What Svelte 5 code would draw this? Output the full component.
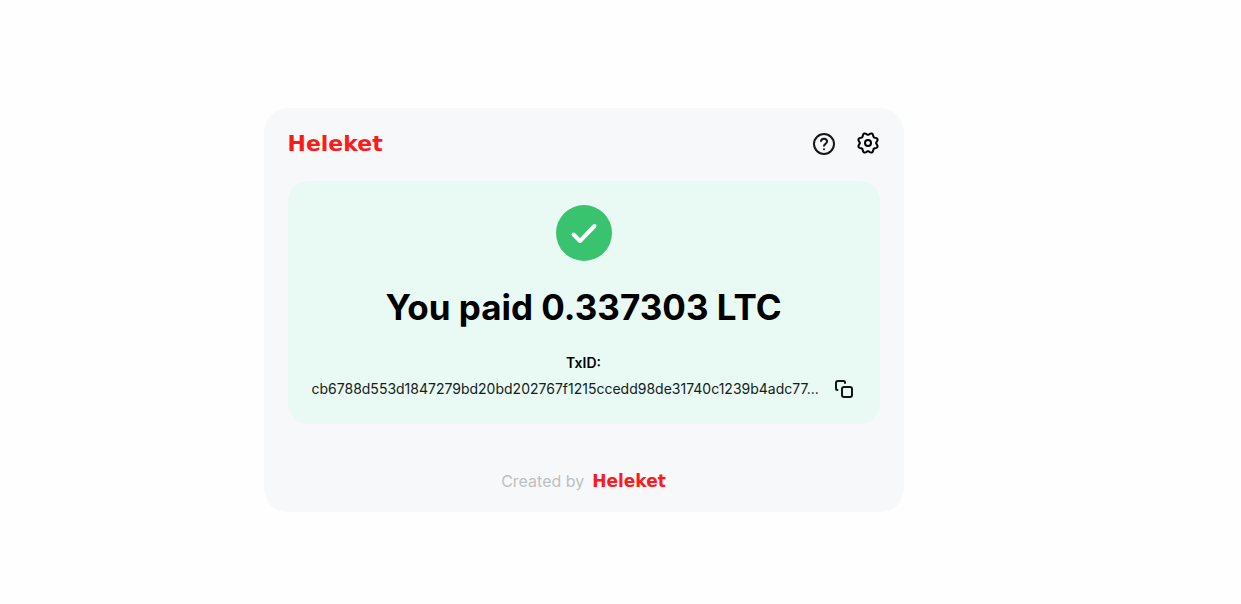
<script lang="ts">
  const amount = '0.337303';
  const currency = 'LTC';
  const txid = 'cb6788d553d1847279bd20bd202767f1215ccedd98de31740c1239b4adc77';

  // outline of the eight-lobed settings gear, centred on 12,12
  function gearPath(radius: number, depth: number) {
    const points = Array.from({ length: 96 }, (_, i) => {
      const angle = (i / 96) * Math.PI * 2;
      const r = radius - depth * Math.cos(8 * angle);
      return `${(12 + r * Math.cos(angle)).toFixed(2)} ${(12 + r * Math.sin(angle)).toFixed(2)}`;
    });
    return `M${points.join('L')}Z`;
  }

  function copyTxid() {
    navigator.clipboard?.writeText(txid);
  }
</script>

<main class="page">
  <section class="card">
    <header class="header">
      <a class="logo" href="/">Heleket</a>
      <div class="actions">
        <button type="button" class="icon-btn" aria-label="Help">
          <svg width="24" height="24" viewBox="0 0 24 24" fill="none" stroke="#15181b" stroke-width="2" stroke-linecap="round" stroke-linejoin="round">
            <circle cx="12" cy="12" r="10" />
            <path d="M9 9a3.1 3.1 0 0 1 6.1.6c0 2.1-3.1 2.3-3.1 4.2" />
            <path d="M12 17.2h.01" />
          </svg>
        </button>
        <button type="button" class="icon-btn" aria-label="Settings">
          <svg width="24" height="24" viewBox="0 1 24 24" fill="none" stroke="#000" stroke-width="2" stroke-linejoin="round">
            <path d={gearPath(9.2, 1.05)} />
            <circle cx="12" cy="12" r="3" />
          </svg>
        </button>
      </div>
    </header>

    <div class="status">
      <svg width="56" height="56" viewBox="0 0 56 56" fill="none">
        <circle cx="28" cy="28" r="28" fill="#3ac36f" />
        <path d="M17.5 29.5l6.5 6.5 14.500-15" stroke="#fff" stroke-width="4" stroke-linecap="round" stroke-linejoin="round" />
      </svg>
      <h1 class="title">You paid {amount} {currency}</h1>
      <h2 class="label">TxID:</h2>
      <div class="tx">
        <span class="hash">{txid}...</span>
        <button type="button" class="icon-btn" aria-label="Copy TxID" onclick={copyTxid}>
          <svg width="24" height="24" viewBox="0 0 24 24" fill="none" stroke="#101715" stroke-width="2" stroke-linecap="round" stroke-linejoin="round">
            <rect x="10" y="10" width="10" height="10" rx="2" />
            <path d="M5.5 13A1.5 1.5 0 0 1 4 11.500V6a2 2 0 0 1 2-2h5.500A1.500 1.500 0 0 1 13 5.500V6" />
          </svg>
        </button>
      </div>
    </div>

    <footer class="footer">
      <span>Created by</span>
      <a class="logo small" href="/">Heleket</a>
    </footer>
  </section>
</main>

<style>
  :global(body) {
    margin: 0;
    background: #fefefe;
  }

  .page {
    padding: 108px 74px 92px 0;
    font-family: Inter, 'Noto Sans', sans-serif;
    color: #000;
  }

  .card {
    box-sizing: border-box;
    max-width: 640px;
    margin: 0 auto;
    padding: 24px 24px 19px;
    border-radius: 24px;
    background: #f6f8fa;
  }

  .header {
    display: flex;
    align-items: center;
    justify-content: space-between;
    height: 24px;
    margin-bottom: 25px;
  }

  .logo {
    font-family: 'DejaVu Sans', sans-serif;
    font-size: 22px;
    font-weight: 700;
    line-height: 24px;
    color: #ff1a1a;
    text-decoration: none;
  }

  .logo.small {
    font-size: 17px;
  }

  .actions {
    display: flex;
    gap: 20px;
  }

  .icon-btn {
    display: flex;
    flex-shrink: 0;
    padding: 0;
    border: none;
    background: none;
    cursor: pointer;
  }

  .status {
    display: flex;
    flex-direction: column;
    align-items: center;
    padding: 24px 24px 23px;
    border-radius: 20px;
    background: #e8faf3;
  }

  .title {
    margin: 24px 0;
    font-size: 35px;
    font-weight: 700;
    line-height: 44px;
    text-align: center;
  }

  .label {
    margin: 0 0 4px;
    font-size: 14px;
    font-weight: 600;
    line-height: 20px;
  }

  .tx {
    display: flex;
    align-items: center;
    justify-content: space-between;
    width: 100%;
  }

  .hash {
    overflow: hidden;
    font-size: 14px;
    line-height: 24px;
    white-space: nowrap;
    text-overflow: ellipsis;
    color: #14201c;
  }

  .footer {
    display: flex;
    align-items: center;
    justify-content: center;
    gap: 8px;
    margin-top: 45px;
    font-size: 16px;
    line-height: 24px;
    color: #bfbfbf;
  }
</style>
